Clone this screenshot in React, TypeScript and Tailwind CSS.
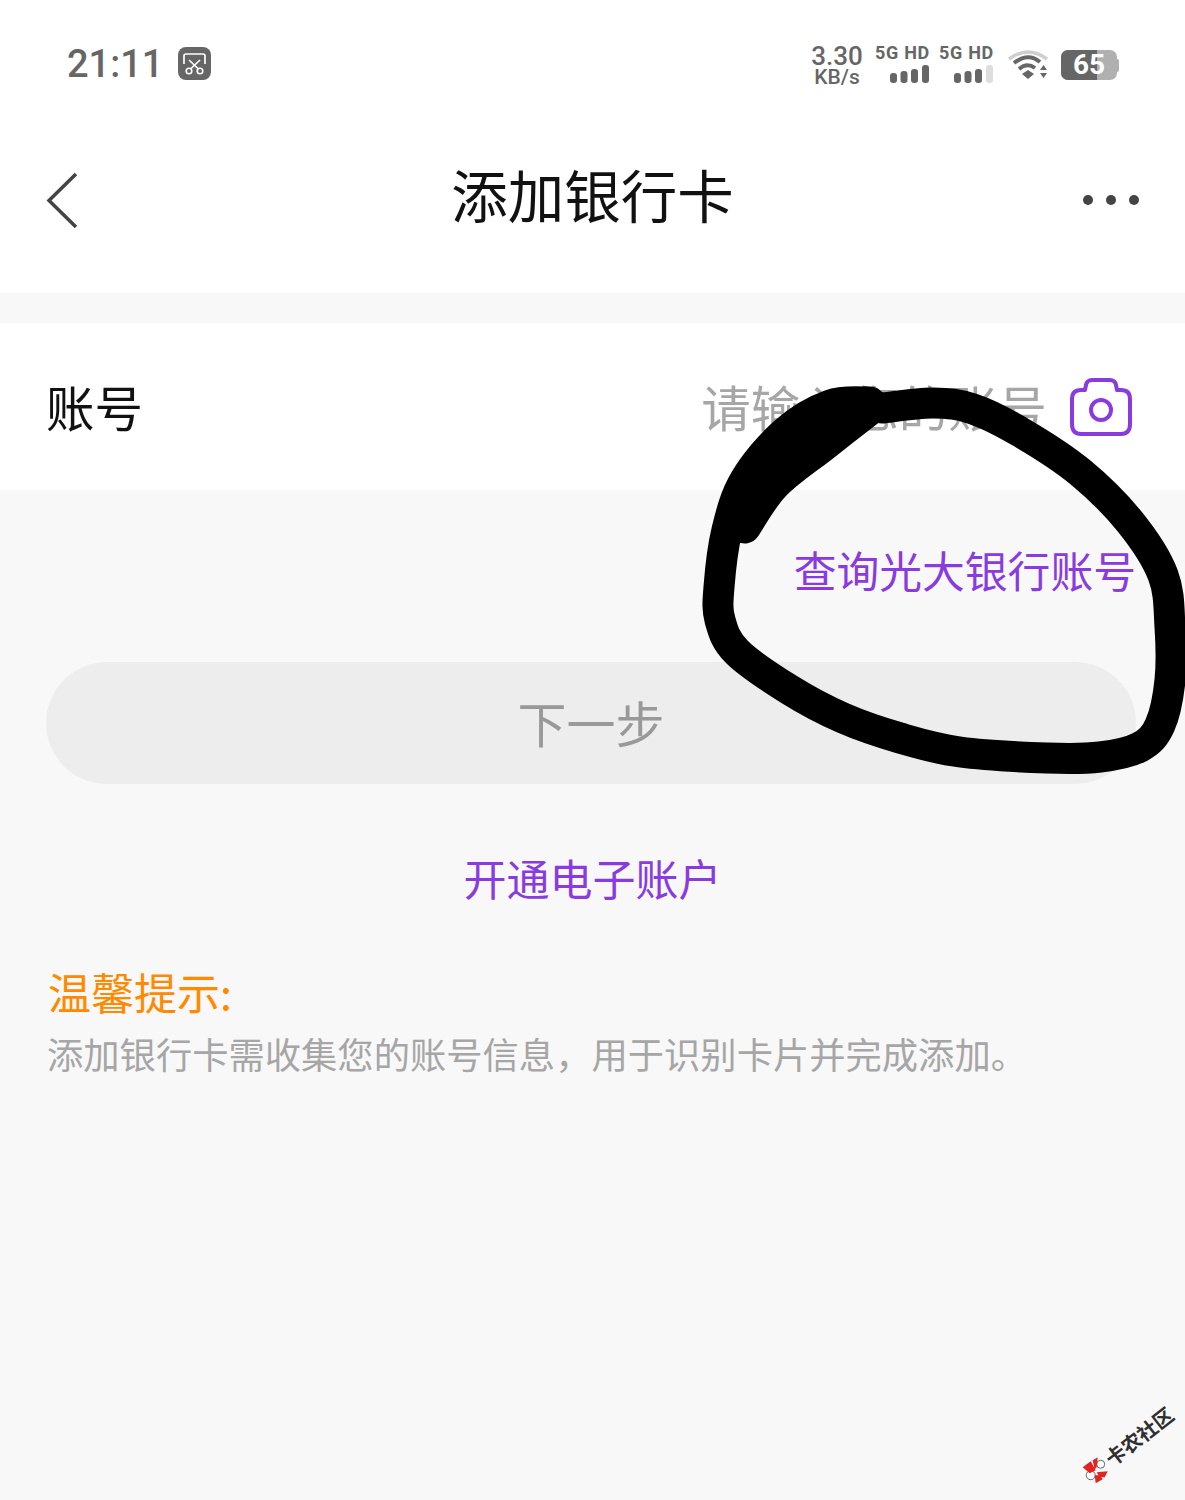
const cjk = "font-['Noto_Sans_CJK_SC','Noto_Sans',sans-serif]"

// pen strokes traced from the picture, joined into one smooth line
function smooth(points: number[][]) {
  let d = `M${points[0][0]} ${points[0][1]}`
  for (let i = 0; i < points.length - 1; i++) {
    const p0 = points[i - 1] || points[i]
    const p1 = points[i]
    const p2 = points[i + 1]
    const p3 = points[i + 2] || p2
    const c1x = p1[0] + (p2[0] - p0[0]) / 6
    const c1y = p1[1] + (p2[1] - p0[1]) / 6
    const c2x = p2[0] - (p3[0] - p1[0]) / 6
    const c2y = p2[1] - (p3[1] - p1[1]) / 6
    d += `C${c1x} ${c1y} ${c2x} ${c2y} ${p2[0]} ${p2[1]}`
  }
  return d
}

const ring = [
  [882, 408], [933, 403], [973, 409], [1022, 433], [1080, 472], [1130, 522], [1163, 575], [1170, 627],
  [1170, 680], [1160, 725], [1140, 747], [1100, 757], [1047, 758], [960, 752], [900, 738], [843, 718],
  [790, 690], [737, 652], [720, 620], [719, 587], [727, 530], [745, 480], [785, 432], [830, 405], [870, 402],
]
const inner = [[745, 528], [775, 485], [825, 445], [875, 406]]
const middle = [[738, 520], [762, 470], [808, 425], [865, 402]]

function SignalBars({ weak }: { weak?: boolean }) {
  return (
    <svg width="40" height="20" viewBox="0 0 40 20" className="block">
      <rect x="0" y="9" width="7" height="10" rx="3" fill="#666" />
      <rect x="10.5" y="7" width="7" height="12" rx="3" fill="#666" />
      <rect x="21" y="5" width="7" height="14" rx="3" fill="#666" />
      <rect x="32" y="1" width="7" height="18" rx="3" fill={weak ? '#dedede' : '#666'} />
    </svg>
  )
}

function Network({ weak }: { weak?: boolean }) {
  return (
    <div className="flex w-[54px] flex-col items-end">
      <span className="text-[18px] leading-[22px] font-bold tracking-[0.7px] whitespace-nowrap text-[#666]">5G HD</span>
      <SignalBars weak={weak} />
    </div>
  )
}

function StatusBar() {
  return (
    <div className="flex h-[128px] items-center justify-between bg-white pr-[66px] pl-[67px] font-['Roboto',sans-serif]">
      <div className="flex items-center gap-[15px]">
        <span className="text-[38px] leading-none font-medium text-[#666]">21:11</span>
        <svg width="33" height="33" viewBox="0 0 33 33" className="-mt-[1px]">
          <rect width="33" height="33" rx="8" fill="#666" />
          <path d="M6 17V9q0-2 2-2h17q2 0 2 2v8" fill="none" stroke="#fff" strokeWidth="1.7" />
          <path d="M11 13l9.500 9M22 13l-9.500 9" stroke="#fff" strokeWidth="1.7" />
          <circle cx="11" cy="24" r="2.800" fill="none" stroke="#fff" strokeWidth="1.600" />
          <circle cx="22" cy="24" r="2.800" fill="none" stroke="#fff" strokeWidth="1.600" />
        </svg>
      </div>
      <div className="flex items-center pt-[2px]">
        <div className="flex w-[52px] flex-col items-center text-[#666]">
          <span className="text-[26px] leading-[24px] font-medium">3.30</span>
          <span className="text-[21px] leading-[18px] font-medium">KB/s</span>
        </div>
        <div className="-mt-[5px] ml-[13px] flex gap-[10px]">
          <Network />
          <Network weak />
        </div>
        <svg width="42" height="34" viewBox="0 0 42 34" className="ml-[13px]">
          <path d="M2 11Q21-3 40 11" fill="none" stroke="#cfcfcf" strokeWidth="3.500" />
          <path d="M7 15Q21 4 33 14" fill="none" stroke="#666" strokeWidth="4" />
          <path d="M12 21Q20 14 28 20" fill="none" stroke="#666" strokeWidth="4" />
          <path d="M15 26l6-4 6 4-6 5z" fill="#666" />
          <path d="M33 22l3.500-5 3.500 5zM33 25h7l-3.500 5z" fill="#666" />
        </svg>
        <div className="relative ml-[12px] h-[30px] w-[56px] rounded-[7px] bg-[#b0b0b0]">
          <div className="h-full w-[36px] rounded-l-[7px] bg-[#666]" />
          <span className="absolute top-0 left-[12px] text-[28px] leading-[30px] font-bold text-white">65</span>
        </div>
        <div className="h-[13px] w-[2px] rounded-r bg-[#b0b0b0]" />
      </div>
    </div>
  )
}

function Scribble() {
  return (
    <svg width="1185" height="1500" viewBox="0 0 1185 1500" className="pointer-events-none absolute top-0 left-0" fill="none" stroke="#000" strokeLinecap="round" strokeLinejoin="round">
      <path strokeWidth="31" d={smooth(ring)} />
      <path strokeWidth="31" d={smooth(middle)} />
      <path strokeWidth="31" d={smooth(inner)} />
    </svg>
  )
}

function Watermark() {
  return (
    <div className="absolute top-[1402px] left-[1075px] flex h-[86px] w-[105px] items-center justify-center">
      <div className="flex -rotate-[38deg] items-center gap-[2px]">
        <svg width="26" height="26" viewBox="0 0 26 26" className="rotate-[38deg]">
          <circle cx="18" cy="7" r="4" fill="#fff" stroke="#444" strokeWidth="0.800" />
          <circle cx="8" cy="18" r="4.500" fill="#fff" stroke="#444" strokeWidth="0.800" />
          <path d="M0 10L8 4L13 13L7 16zM10 3L15 0L14 10L12 12zM14 15L25 14L22 20L17 20zM12 18L17 18L20 22L13 26z" fill="#e3231f" />
        </svg>
        <span className={`${cjk} text-[20px] leading-none font-bold whitespace-nowrap text-[#2f2f2f]`}>卡农社区</span>
      </div>
    </div>
  )
}

export default function App() {
  return (
    <div className={`${cjk} relative h-[1500px] w-[1185px] overflow-hidden bg-[#f8f8f8]`}>
      <StatusBar />

      <header className="relative flex h-[165px] items-start justify-between bg-white pt-[39px] pr-[46px] pl-[46px]">
        <svg width="32" height="58" viewBox="0 0 32 58" className="mt-[4px]">
          <path d="M30 3L3 29.500L30 56" fill="none" stroke="#444" strokeWidth="3.500" />
        </svg>
        <h1 className="absolute top-[25px] right-0 left-0 text-center text-[56.500px] leading-[80px] font-normal text-[#111]">添加银行卡</h1>
        <div className="mt-[28px] flex items-center gap-[13px]">
          <span className="h-[10px] w-[10px] rounded-full bg-[#444]" />
          <span className="h-[10px] w-[10px] rounded-full bg-[#444]" />
          <span className="h-[10px] w-[10px] rounded-full bg-[#444]" />
        </div>
      </header>

      <div className="mt-[30px] flex h-[167px] items-center justify-between bg-white pr-[52px] pl-[46px]">
        <span className="text-[48.500px] text-[#111]">账号</span>
        <div className="flex items-center gap-[22px]">
          <span className="text-[49.400px] text-[#a6a6a6]">请输入您的账号</span>
          <svg width="64" height="60" viewBox="0 0 64 60" fill="none" stroke="#8a3be0" strokeWidth="4" className="mt-[2px]">
            <path d="M3 22q0-9 9-9h4l1-5q1-5 6-5h18q5 0 6 5l1 5h4q9 0 9 9v25q0 10-9 10H12q-9 0-9-10z" strokeLinejoin="round" />
            <circle cx="32" cy="33" r="10" />
          </svg>
        </div>
      </div>

      <div className="flex h-[172px] items-center justify-end pr-[49px] pb-[14px]">
        <a className="text-[42.800px] text-[#8a3be0]">查询光大银行账号</a>
      </div>

      <button className="mx-[46px] flex h-[122px] w-[1090px] items-center justify-center rounded-full bg-[#ededed] pb-[3px] text-[49px] text-[#999]">
        下一步
      </button>

      <div className="mt-[61px] text-center text-[43px] leading-[64px] text-[#8a3be0]">开通电子账户</div>

      <div className="mt-[50px] px-[48px]">
        <div className="text-[43px] leading-[64px] text-[#ff8a00]">温馨提示:</div>
        <p className="mt-0 -ml-[1px] text-[36.300px] leading-[60px] whitespace-nowrap text-[#a6a6a6]">添加银行卡需收集您的账号信息，用于识别卡片并完成添加。</p>
      </div>

      <Scribble />
      <Watermark />
    </div>
  )
}
